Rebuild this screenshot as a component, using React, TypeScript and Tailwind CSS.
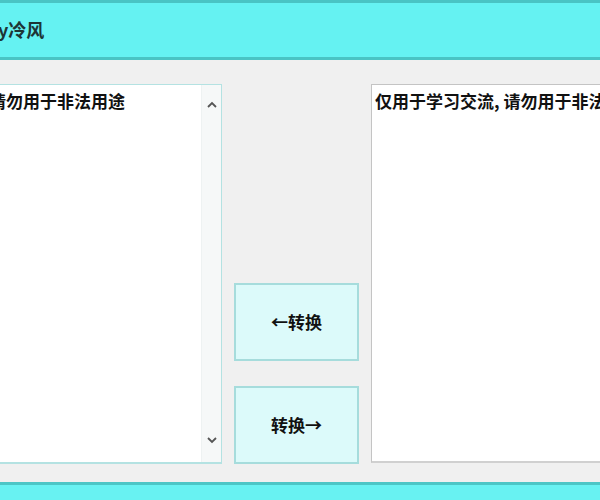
import React from 'react';

const cjk = { fontFamily: '"Noto Sans CJK SC", "Liberation Sans", sans-serif' };

function Chevron({ up }: { up?: boolean }) {
  return (
    <svg width="10" height="7" viewBox="0 0 10 7" fill="none" stroke="#555" strokeWidth="1.8">
      {up ? <path d="M1 6 L5 2 L9 6" /> : <path d="M1 1 L5 5 L9 1" />}
    </svg>
  );
}

export default function App() {
  return (
    <div className="w-[600px] h-[500px] flex flex-col bg-[#f0f0f0] overflow-hidden" style={cjk}>
      {/* title bar */}
      <div className="h-[60px] shrink-0 flex items-center bg-[#65f2f2] border-t-[3px] border-b-[3px] border-[#49c4c4]">
        <span className="text-[18px] font-bold text-[#1d3535] ml-[-2px] mt-[-2px]">y冷风</span>
      </div>

      {/* body */}
      <div className="flex-1 flex items-start pt-[24px]">
        {/* left box */}
        <div className="ml-[-14px] w-[236px] h-[380px] shrink-0 flex bg-white border border-[#b4e2e2] border-b-2">
          <div className="flex-1 pl-[2px] pt-[5px] text-[17px] leading-[22px] font-semibold text-[#111]">
            请勿用于非法用途
          </div>
          <div className="w-[20px] flex flex-col items-center justify-between pt-[16px] pb-[18px] bg-[#f6f8f8] border-l border-[#eef2f2]">
            <Chevron up />
            <Chevron />
          </div>
        </div>

        {/* buttons */}
        <div className="ml-[12px] w-[125px] h-[380px] shrink-0 flex flex-col justify-end gap-[25px]">
          <button className="h-[78px] bg-[#dcfafa] border-2 border-[#a6dcdc] text-[17px] font-semibold text-[#111]">
            ←转换
          </button>
          <button className="h-[78px] bg-[#dcfafa] border-2 border-[#a6dcdc] text-[17px] font-semibold text-[#111]">
            转换→
          </button>
        </div>

        {/* right box */}
        <div className="ml-[12px] w-[260px] h-[379px] shrink-0 bg-white border border-[#c4c4c4] border-b-2 border-b-[#d0d0d0] overflow-hidden">
          <div className="pl-[3px] pt-[5px] text-[17px] leading-[22px] font-semibold text-[#111] whitespace-nowrap">
            仅用于学习交流,<span className="ml-[4px]">请勿用于非法用途</span>
          </div>
        </div>
      </div>

      {/* bottom bar */}
      <div className="h-[18px] shrink-0 bg-[#68f2f2] border-t-[3px] border-[#4cc6c6]"></div>
    </div>
  );
}
